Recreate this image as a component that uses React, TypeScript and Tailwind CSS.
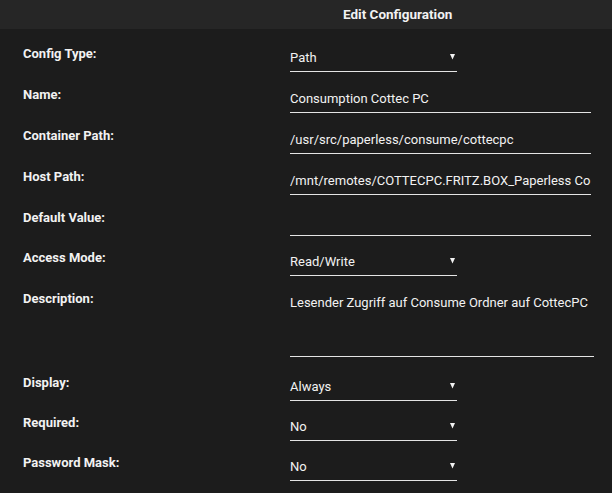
import React from 'react';

type Row = {
  label: string;
  value: string;
  kind: 'select' | 'text' | 'area';
  h: string;
};

const rows: Row[] = [
  { label: 'Config Type:', value: 'Path', kind: 'select', h: 'h-[41px]' },
  { label: 'Name:', value: 'Consumption Cottec PC', kind: 'text', h: 'h-[41px]' },
  { label: 'Container Path:', value: '/usr/src/paperless/consume/cottecpc', kind: 'text', h: 'h-[41px]' },
  { label: 'Host Path:', value: '/mnt/remotes/COTTECPC.FRITZ.BOX_Paperless Co', kind: 'text', h: 'h-[41px]' },
  { label: 'Default Value:', value: '', kind: 'text', h: 'h-[40px]' },
  { label: 'Access Mode:', value: 'Read/Write', kind: 'select', h: 'h-[41px]' },
  { label: 'Description:', value: 'Lesender Zugriff auf Consume Ordner auf CottecPC', kind: 'area', h: 'h-[84px]' },
  { label: 'Display:', value: 'Always', kind: 'select', h: 'h-[40px]' },
  { label: 'Required:', value: 'No', kind: 'select', h: 'h-[40px]' },
  { label: 'Password Mask:', value: 'No', kind: 'select', h: 'h-[40px]' },
];

const Arrow = () => (
  <svg width="5" height="6" viewBox="0 0 5 6" className="absolute right-[2px] top-[10px]">
    <polygon points="0,0 5,0 2.5,5.5" fill="#f2f2f2" />
  </svg>
);

const Field: React.FC<{ row: Row }> = ({ row }) => {
  if (row.kind === 'select') {
    return (
      <div className="relative w-[167px] h-[28px] border-b border-[#e4e4e4] pt-[4px] leading-[20px]">
        {row.value}
        <Arrow />
      </div>
    );
  }
  if (row.kind === 'area') {
    return (
      <div className="w-[304px] h-[68px] border-b border-[#e4e4e4] pt-[4px] leading-[20px] whitespace-nowrap">
        {row.value}
      </div>
    );
  }
  return (
    <div className="w-[301px] h-[28px] border-b border-[#e4e4e4] pt-[4px] leading-[20px] whitespace-nowrap overflow-hidden">
      {row.value}
    </div>
  );
};

export default function App() {
  return (
    <div className="w-[612px] h-[493px] bg-[#1c1c1c] text-[#f2f2f2] overflow-hidden font-['Roboto',sans-serif]">
      <div className="h-[29px] bg-[#262626] flex items-center pl-[343px] text-[13.5px] font-bold">
        Edit Configuration
      </div>
      <div className="pt-[15px] pl-[23px]">
        {rows.map((row) => (
          <div key={row.label} className={`flex ${row.h}`}>
            <div className="w-[267px] text-[13px] font-bold leading-[20px]">{row.label}</div>
            <div className="text-[13px]">
              <Field row={row} />
            </div>
          </div>
        ))}
      </div>
    </div>
  );
}
